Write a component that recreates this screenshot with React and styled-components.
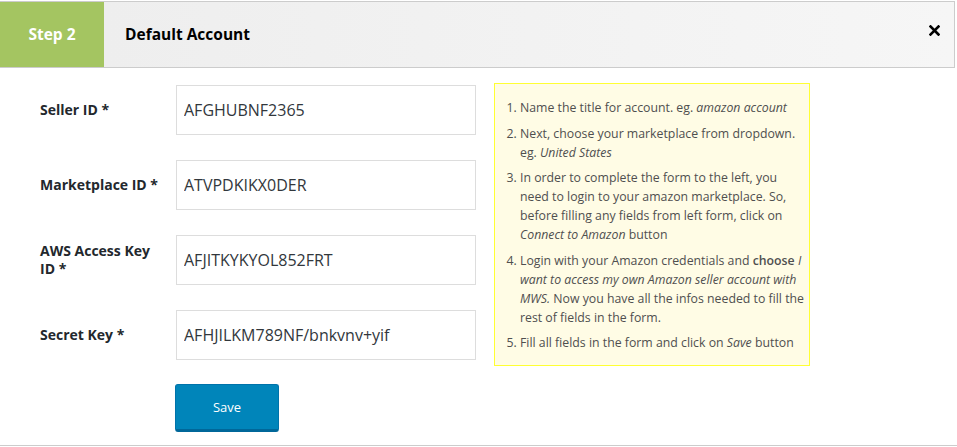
import React from "react"
import styled, { createGlobalStyle } from "styled-components"

const GlobalStyle = createGlobalStyle`
  html, body {
    margin: 0;
    padding: 0;
    background: #fff;
  }
  body {
    font-family: "Open Sans", "Noto Sans", sans-serif;
    color: #23282d;
  }
`

const Modal = styled.div`
  width: 957px;
  height: 447px;
  padding-top: 1px;
  box-sizing: border-box;
  display: flex;
  flex-direction: column;
`

const Header = styled.header`
  display: flex;
  align-items: stretch;
  height: 65px;
  width: 954px;
  border: 1px solid #cccccc;
  border-left: none;
  background: linear-gradient(to right, #ededed, #f6f6f6);
`

const StepTag = styled.div`
  display: flex;
  align-items: center;
  justify-content: center;
  width: 104px;
  padding-bottom: 2px;
  box-sizing: border-box;
  background: #a4c561;
  color: #fff;
  font-size: 15.5px;
  font-weight: 700;
`

const Title = styled.h1`
  flex: 1;
  margin: 0;
  padding: 0 0 2px 21px;
  display: flex;
  align-items: center;
  font-size: 15.5px;
  font-weight: 700;
  color: #000;
`

const Close = styled.button`
  border: none;
  background: none;
  padding: 0;
  width: 40px;
  display: flex;
  align-items: flex-start;
  justify-content: center;
  padding-top: 23px;
  cursor: pointer;
`

const Body = styled.div`
  flex: 1;
  display: flex;
  align-items: flex-start;
  gap: 18px;
  padding: 15px 0 0 40px;
  border-bottom: 1px solid #cccccc;
  margin-bottom: 1px;
`

const Form = styled.form`
  display: flex;
  flex-direction: column;
  gap: 25px;
  padding-top: 2px;
`

const Row = styled.div`
  display: flex;
  align-items: center;
`

const Label = styled.label`
  width: 136px;
  padding-right: 10px;
  box-sizing: border-box;
  font-size: 14px;
  line-height: 18px;
  font-weight: 700;
  color: #23282d;
`

const Input = styled.input`
  width: 300px;
  height: 50px;
  box-sizing: border-box;
  border: 1px solid #dddddd;
  padding: 0 7px;
  font-family: "Open Sans", "Noto Sans", sans-serif;
  font-size: 16px;
  color: #32373c;
  background: #fff;
  outline: none;
`

const SaveButton = styled.button`
  margin-left: 135px;
  margin-top: -1px;
  width: 104px;
  height: 48px;
  border: 1px solid #0073aa;
  border-bottom: 3px solid #006799;
  border-radius: 3px;
  background: #0085ba;
  color: #fff;
  font-family: "Open Sans", "Noto Sans", sans-serif;
  font-size: 13px;
  cursor: pointer;
  padding: 0;
`

const Note = styled.div`
  width: 314px;
  border: 1px solid #ffff33;
  background: #fffce5;
  padding: 14px 0 13px 0;
  color: #4f4f4f;
  font-size: 12.3px;
  line-height: 19px;
`

const Steps = styled.ol`
  margin: 0;
  padding-left: 25px;
  padding-right: 0;

  li + li {
    margin-top: 6.5px;
  }
`

const steps = [
  <>Name the title for account. eg. <i>amazon account</i></>,
  <>Next, choose your marketplace from dropdown.<br />eg. <i>United States</i></>,
  <>In order to complete the form to the left, you<br />need to login to your amazon marketplace. So,<br />before filling any fields from left form, click on<br /><i>Connect to Amazon</i> button</>,
  <>Login with your Amazon credentials and <b style={{ fontWeight: 600 }}>choose</b> <i>I<br />want to access my own Amazon seller account with<br />MWS.</i> Now you have all the infos needed to fill the<br />rest of fields in the form.</>,
  <>Fill all fields in the form and click on <i>Save</i> button</>,
]

const fields = [
  { label: "Seller ID *", value: "AFGHUBNF2365" },
  { label: "Marketplace ID *", value: "ATVPDKIKX0DER" },
  { label: "AWS Access Key ID *", value: "AFJITKYKYOL852FRT" },
  { label: "Secret Key *", value: "AFHJILKM789NF/bnkvnv+yif" },
]

export default function App() {
  return (
    <Modal>
      <GlobalStyle />
      <Header>
        <StepTag>Step 2</StepTag>
        <Title>Default Account</Title>
        <Close aria-label="Close">
          <svg width="11" height="11" viewBox="0 0 11 11">
            <path d="M1.5 1.5 L9.5 9.5 M9.5 1.5 L1.5 9.5" stroke="#000" strokeWidth="2.6" strokeLinecap="square" />
          </svg>
        </Close>
      </Header>
      <Body>
        <Form onSubmit={e => e.preventDefault()}>
          {fields.map(f => (
            <Row key={f.label}>
              <Label>{f.label}</Label>
              <Input defaultValue={f.value} />
            </Row>
          ))}
          <SaveButton type="submit">Save</SaveButton>
        </Form>
        <Note>
          <Steps>
            {steps.map((s, i) => <li key={i}>{s}</li>)}
          </Steps>
        </Note>
      </Body>
    </Modal>
  )
}
